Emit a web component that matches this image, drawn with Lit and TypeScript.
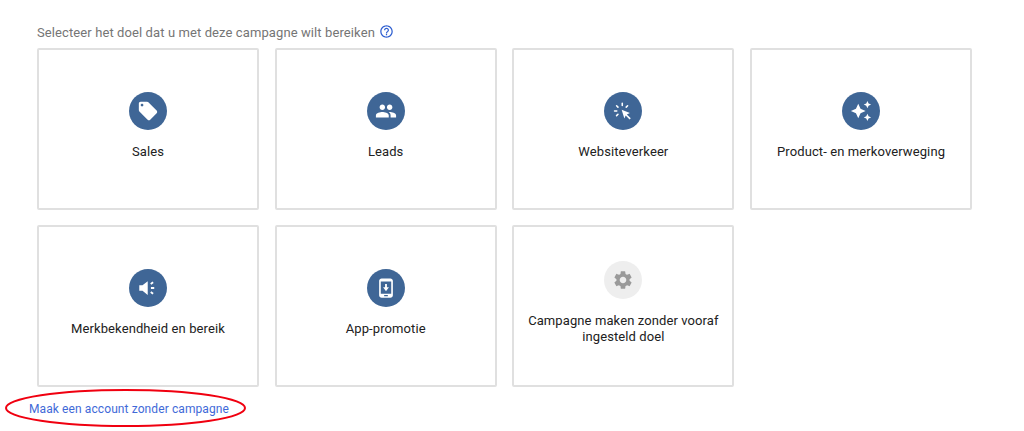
import { LitElement, html, css, svg } from "lit";
import { customElement } from "lit/decorators.js";

const ICONS = {
  tag: svg`<path d="M21.41 11.58l-9-9C12.05 2.22 11.55 2 11 2H4c-1.1 0-2 .9-2 2v7c0 .55.22 1.05.59 1.42l9 9c.36.36.86.58 1.41.58s1.05-.22 1.41-.59l7-7c.37-.36.59-.86.59-1.41s-.23-1.06-.59-1.42zM5.5 7C4.67 7 4 6.33 4 5.5S4.67 4 5.5 4 7 4.67 7 5.5 6.33 7 5.5 7z"/>`,
  people: svg`<path d="M16 11c1.66 0 2.99-1.34 2.99-3S17.66 5 16 5s-3 1.34-3 3 1.34 3 3 3zm-8 0c1.66 0 2.99-1.34 2.99-3S9.66 5 8 5 5 6.34 5 8s1.34 3 3 3zm0 2c-2.33 0-7 1.17-7 3.5V19h14v-2.5C15 14.17 10.33 13 8 13zm8 0c-.29 0-.62.02-.97.05 1.16.84 1.97 1.97 1.97 3.45V19h6v-2.5c0-2.33-4.67-3.5-7-3.5z"/>`,
  click: svg`<path d="M10.500 10.500l9 3.800-3.300 1.400 4.300 4.300-1.300 1.300-4.300-4.300-1.400 3.300z"/><path d="M11.200 3.500v2.400M5 6.300l1.500 1.500M17 6.300l-1.500 1.500M2.800 12h2.400M6.500 15.500L5 17" stroke="#fff" stroke-width="1.700" stroke-linecap="round" fill="none"/>`,
  sparkle: svg`<path d="M19 9l1.25-2.75L23 5l-2.75-1.25L19 1l-1.25 2.75L15 5l2.75 1.25L19 9zm-7.5.5L9 4 6.5 9.5 1 12l5.500 2.500L9 20l2.500-5.500L17 12l-5.500-2.500zM19 15l-1.250 2.750L15 19l2.750 1.250L19 23l1.250-2.750L23 19l-2.750-1.250L19 15z"/>`,
  megaphone: svg`<path d="M2.500 9v6h3.500l5.700 4.500V4.500L6 9z"/><path d="M15.200 12h3.600M15 7.700l2.600-1.900M15 16.300l2.600 1.900" stroke="#fff" stroke-width="2" fill="none"/>`,
  phone: svg`<path fill-rule="evenodd" d="M16.800 1.500H7.200C5.700 1.500 4.500 2.700 4.500 4.200v15.600c0 1.500 1.200 2.700 2.700 2.700h9.600c1.500 0 2.700-1.200 2.700-2.700V4.200c0-1.500-1.200-2.700-2.700-2.700zM6.300 4.800h11.400v13.400H6.300zM10 19.700h4v1.200h-4z"/><path d="M11 7.500h2v3.800h2.200L12 15.500l-3.200-4.200H11z"/>`,
  gear: svg`<path d="M19.14 12.94c.04-.3.06-.61.06-.94 0-.32-.02-.64-.07-.94l2.03-1.58a.49.49 0 00.12-.61l-1.92-3.32a.488.488 0 00-.59-.22l-2.39.96c-.5-.38-1.03-.7-1.62-.94l-.36-2.54a.484.484 0 00-.48-.41h-3.84c-.24 0-.43.17-.47.41l-.36 2.54c-.59.24-1.13.57-1.62.94l-2.39-.96c-.22-.08-.47 0-.59.22L2.74 8.87c-.12.21-.08.47.12.61l2.03 1.58c-.05.3-.09.63-.09.94s.02.64.07.94l-2.03 1.58a.49.49 0 00-.12.61l1.92 3.32c.12.22.37.29.59.22l2.39-.96c.5.38 1.03.7 1.62.94l.36 2.54c.05.24.24.41.48.41h3.84c.24 0 .44-.17.47-.41l.36-2.54c.59-.24 1.13-.56 1.62-.94l2.39.96c.22.08.47 0 .59-.22l1.92-3.32c.12-.22.07-.47-.12-.61l-2.01-1.58zM12 15.600c-1.980 0-3.600-1.620-3.600-3.600s1.620-3.600 3.600-3.600 3.600 1.620 3.600 3.600-1.620 3.600-3.600 3.600z"/>`,
};

const GOALS = [
  { label: "Sales", icon: ICONS.tag },
  { label: "Leads", icon: ICONS.people },
  { label: "Websiteverkeer", icon: ICONS.click },
  { label: "Product- en merkoverweging", icon: ICONS.sparkle },
  { label: "Merkbekendheid en bereik", icon: ICONS.megaphone },
  { label: "App-promotie", icon: ICONS.phone },
  { label: "Campagne maken zonder vooraf ingesteld doel", icon: ICONS.gear, muted: true },
];

@customElement("app-root")
export class AppRoot extends LitElement {
  static styles = css`
    :host {
      display: block;
      position: relative;
      height: 431px;
      background: #fff;
      font-family: Roboto, "Liberation Sans", sans-serif;
      overflow: hidden;
    }
    .page {
      padding: 23px 0 0 37px;
    }
    .title {
      display: flex;
      align-items: flex-start;
      gap: 4px;
      height: 25px;
      font-size: 13px;
      line-height: 19px;
      color: #757575;
      letter-spacing: 0.1px;
    }
    .help {
      width: 15px;
      height: 15px;
      margin-top: 1px;
      fill: #2f5fd0;
    }
    .grid {
      display: grid;
      grid-template-columns: repeat(4, 222px);
      grid-auto-rows: 162px;
      gap: 15px 15.7px;
    }
    .card {
      box-sizing: border-box;
      display: flex;
      flex-direction: column;
      align-items: center;
      justify-content: center;
      padding: 0 12px 6px;
      border: 2px solid #e0e0e0;
      border-radius: 2px;
    }
    .badge {
      display: flex;
      align-items: center;
      justify-content: center;
      width: 38px;
      height: 38px;
      border-radius: 50%;
      background: #3f6696;
      fill: #fff;
    }
    .badge svg {
      width: 22px;
      height: 22px;
    }
    .badge.muted {
      background: #eeeeee;
      fill: #9a9a9a;
    }
    .label {
      margin-top: 14px;
      font-size: 13px;
      line-height: 16px;
      letter-spacing: 0.1px;
      color: #212121;
      text-align: center;
    }
    .link {
      display: block;
      margin: 14px 0 0 -8px;
      font-size: 12px;
      line-height: 17px;
      color: #3f6ad8;
      text-decoration: none;
      letter-spacing: 0.1px;
    }
    .ring {
      position: absolute;
      left: 5px;
      top: 389px;
      width: 241px;
      height: 39px;
      fill: none;
      stroke: #f00010;
      stroke-width: 2;
    }
  `;

  render() {
    return html`
      <div class="page">
        <div class="title">
          <span>Selecteer het doel dat u met deze campagne wilt bereiken</span>
          <svg class="help" viewBox="0 0 24 24">
            <path d="M11 18h2v-2h-2v2zm1-16C6.480 2 2 6.480 2 12s4.480 10 10 10 10-4.480 10-10S17.520 2 12 2zm0 18c-4.410 0-8-3.590-8-8s3.590-8 8-8 8 3.590 8 8-3.590 8-8 8zm0-14c-2.210 0-4 1.790-4 4h2c0-1.100.9-2 2-2s2 .9 2 2c0 2-3 1.750-3 5h2c0-2.250 3-2.500 3-5 0-2.210-1.790-4-4-4z"/>
          </svg>
        </div>
        <div class="grid">
          ${GOALS.map(
            (goal) => html`
              <div class="card">
                <div class="badge ${goal.muted ? "muted" : ""}">
                  <svg viewBox="0 0 24 24">${goal.icon}</svg>
                </div>
                <div class="label">${goal.label}</div>
              </div>
            `
          )}
        </div>
        <a class="link" href="#">Maak een account zonder campagne</a>
      </div>
      <svg class="ring" viewBox="0 0 241 39">
        <ellipse cx="120.500" cy="19" rx="119.500" ry="18"></ellipse>
      </svg>
    `;
  }
}

declare global {
  interface HTMLElementTagNameMap {
    "app-root": AppRoot;
  }
}
